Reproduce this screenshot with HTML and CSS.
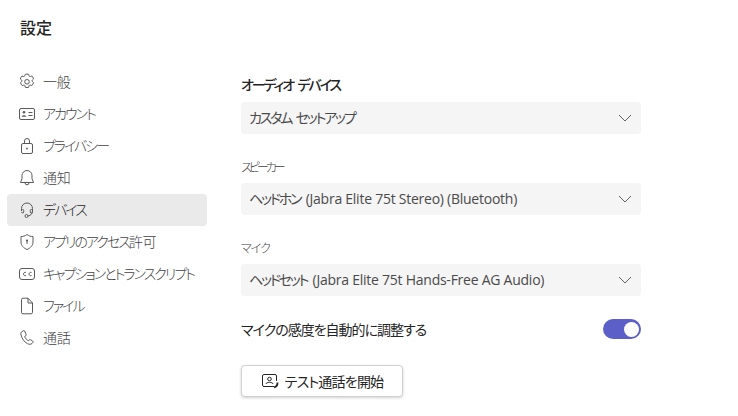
FILE: index.html
```html
<!DOCTYPE html>
<html lang="ja">
  <head>
    <meta charset="UTF-8"/>
    <title>設定</title>
    <link rel="stylesheet" href="styles.css">
  </head>
  <body>
    <h1 class="pageTitle">設定</h1>
    <div class="settings">
      <nav class="sideNav">
        <div class="sideNav_item">
          <svg class="sideNav_icon" viewBox="0 0 18 18"><path d="M7.300 1.300c1.100-.3 2.300-.3 3.400 0l.4 1.600c.1.500.7.800 1.200.6l1.500-.5c.8.800 1.400 1.800 1.700 3l-1.200 1.100c-.4.400-.4 1 0 1.400l1.200 1.100c-.3 1.100-.9 2.200-1.700 3l-1.500-.5c-.5-.2-1.100.1-1.200.6l-.4 1.600c-1.100.3-2.300.3-3.400 0l-.4-1.600c-.1-.5-.7-.8-1.200-.6l-1.500.5c-.8-.8-1.400-1.900-1.700-3l1.200-1.100c.4-.4.4-1 0-1.400L2.300 6c.3-1.200.9-2.200 1.700-3l1.500.5c.5.2 1.100-.1 1.200-.6z"/><circle cx="9" cy="8.800" r="2.300"/></svg>
          <span class="sideNav_label">一般</span>
        </div>
        <div class="sideNav_item">
          <svg class="sideNav_icon" viewBox="0 0 18 18"><rect x="1.500" y="3.500" width="15" height="11" rx="1.500"/><circle class="fill" cx="6" cy="7.200" r="1.300"/><path class="fill" d="M3.700 11.800c0-2 4.600-2 4.600 0z"/><path d="M10.500 7.500h4M10.500 10.500h4"/></svg>
          <span class="sideNav_label navKana">アカウント</span>
        </div>
        <div class="sideNav_item">
          <svg class="sideNav_icon" viewBox="0 0 18 18"><rect x="3.500" y="6.500" width="11" height="10" rx="1.500"/><path d="M6.500 6.500V4a2.500 2.500 0 0 1 5 0v2.500"/><circle class="fill" cx="9" cy="11.500" r="0.900"/></svg>
          <span class="sideNav_label navKana">プライバシー</span>
        </div>
        <div class="sideNav_item">
          <svg class="sideNav_icon" viewBox="0 0 18 18"><path d="M9 1.500a5 5 0 0 1 5 5v3.300l1.500 3.700h-13L4 9.800V6.500a5 5 0 0 1 5-5zM7 13.800a2 2 0 0 0 4 0"/></svg>
          <span class="sideNav_label">通知</span>
        </div>
        <div class="sideNav_item sideNav_item-active">
          <svg class="sideNav_icon" viewBox="0 0 18 18"><path d="M3.500 10V7.500a5.500 5.500 0 0 1 11 0V10c0 2.500-1.500 4.500-4.500 5"/><path d="M3.500 8.500h1.200a1 1 0 0 1 1 1v1.500a1 1 0 0 1-1 1 1.200 1.200 0 0 1-1.200-1.200M14.500 8.500h-1.200a1 1 0 0 0-1 1v1.500a1 1 0 0 0 1 1 1.200 1.200 0 0 0 1.200-1.200"/><circle cx="8.500" cy="15" r="1.500"/></svg>
          <span class="sideNav_label navKana">デバイス</span>
        </div>
        <div class="sideNav_item">
          <svg class="sideNav_icon" viewBox="0 0 18 18"><path d="M9 1.500c2 1.500 3.700 2 6 2v5.500c0 3.500-2.500 6-6 7.500-3.500-1.500-6-4-6-7.500V3.500c2.300 0 4-.5 6-2z"/><circle class="fill" cx="9" cy="7.500" r="1.100"/><path d="M9 8v3"/></svg>
          <span class="sideNav_label"><span class="navKana">アプリのアクセス</span>許可</span>
        </div>
        <div class="sideNav_item">
          <svg class="sideNav_icon" viewBox="0 0 18 18"><rect x="1.500" y="3.500" width="15" height="11" rx="2.500"/><path d="M8 7.500a1.700 1.700 0 1 0 0 3M13.500 7.500a1.700 1.700 0 1 0 0 3"/></svg>
          <span class="sideNav_label navKana">キャプションとトランスクリプト</span>
        </div>
        <div class="sideNav_item">
          <svg class="sideNav_icon" viewBox="0 0 18 18"><path d="M3.500 2.700A1.500 1.500 0 0 1 5 1.200h5L14.500 6v9.300a1.500 1.500 0 0 1-1.500 1.500H5a1.500 1.500 0 0 1-1.500-1.500zM10 1.200V6h4.500"/></svg>
          <span class="sideNav_label navKana">ファイル</span>
        </div>
        <div class="sideNav_item">
          <svg class="sideNav_icon" viewBox="0 0 18 18"><path d="M5.700 1.700 4 2.500C2.800 3.200 2.600 4.500 3 5.900c1 3.700 3.300 7.300 6.500 8.800 1.600.7 3.300.9 4.400-.1l1-1.100c.4-.5.300-1-.2-1.400l-2.200-1.400c-.5-.3-1-.2-1.300.2l-.7.900c-1.800-.8-3.200-2.600-3.800-4.400l1-.6c.5-.3.600-.8.400-1.300L6.700 2c-.2-.4-.6-.5-1-.3z"/></svg>
          <span class="sideNav_label">通話</span>
        </div>
      </nav>
      <main class="devicePanel">
        <h2 class="devicePanel_heading">オーディオ デバイス</h2>
        <div class="selectBox">
          <span class="selectBox_value kana">カスタム セットアップ</span>
          <svg class="selectBox_chevron" viewBox="0 0 14 8"><path d="M1 1l6 6 6-6"/></svg>
        </div>
        <label class="fieldLabel fieldLabel-tight">スピーカー</label>
        <div class="selectBox">
          <span class="selectBox_value"><span class="kana kana-gap">ヘッドホン</span> (Jabra Elite 75t Stereo) (Bluetooth)</span>
          <svg class="selectBox_chevron" viewBox="0 0 14 8"><path d="M1 1l6 6 6-6"/></svg>
        </div>
        <label class="fieldLabel">マイク</label>
        <div class="selectBox">
          <span class="selectBox_value"><span class="kana kana-gap">ヘッドセット</span> (Jabra Elite 75t Hands-Free AG Audio)</span>
          <svg class="selectBox_chevron" viewBox="0 0 14 8"><path d="M1 1l6 6 6-6"/></svg>
        </div>
        <div class="toggleRow">
          <span>マイクの感度を自動的に調整する</span>
          <div class="toggle"><div class="toggle_knob"></div></div>
        </div>
        <button class="testCallButton">
          <svg class="testCallButton_icon" viewBox="0 0 18 16"><path d="M13 13.500H3A1.500 1.500 0 0 1 1.500 12V3A1.500 1.500 0 0 1 3 1.500h11A1.500 1.500 0 0 1 15.500 3v5"/><circle cx="8.500" cy="6" r="1.800"/><path d="M5 11c0-2.200 7-2.200 7 0"/><path class="thick" d="M16.500 9.500c0 2.500-1.500 4.500-3.500 5"/></svg>
          <span>テスト通話を開始</span>
        </button>
      </main>
    </div>
  </body>
</html>
```

FILE: styles.css
```css
* {
  box-sizing: border-box;
}

body {
  margin: 0;
  padding: 16px 0 0 0;
  width: 738px;
  height: 416px;
  overflow: hidden;
  background-color: #fff;
  color: #242424;
  font-family: "Open Sans", "Noto Sans CJK JP", sans-serif;
  font-size: 14px;
  font-feature-settings: "palt";
}

.pageTitle {
  margin: 0 0 0 20px;
  height: 22px;
  line-height: 22px;
  font-size: 16px;
  font-weight: 500;
  font-family: "Noto Sans CJK JP", sans-serif;
}

.settings {
  display: flex;
  margin-top: 26px;
}

.sideNav {
  width: 200px;
  margin-left: 7px;
  padding-top: 2px;
  display: flex;
  flex-direction: column;
}
  .sideNav_item {
    display: flex;
    align-items: center;
    gap: 7px;
    height: 32px;
    padding-left: 11px;
    border-radius: 4px;
    color: #424242;
    font-size: 14px;
    font-weight: 300;
    letter-spacing: -0.2px;
    white-space: nowrap;
  }
  .sideNav_item-active {
    background-color: #ebeaea;
    color: #242424;
  }
  .sideNav_label {
    margin-top: -2px;
  }
  .navKana {
    letter-spacing: -2px;
  }
  .sideNav_icon {
    width: 18px;
    height: 18px;
    flex: none;
    fill: none;
    stroke: #5a5a5a;
    stroke-width: 1;
  }
  .sideNav_icon .fill {
    fill: #5a5a5a;
    stroke: none;
  }

.devicePanel {
  width: 400px;
  margin-left: 34px;
  padding-top: 9px;
}
  .devicePanel_heading {
    margin: 0 0 6px 0;
    height: 23px;
    line-height: 23px;
    font-size: 14px;
    font-weight: 500;
    letter-spacing: -2.1px;
    word-spacing: 3px;
  }

.selectBox {
  display: flex;
  align-items: center;
  justify-content: space-between;
  height: 32px;
  padding: 0 9px 0 8px;
  background-color: #f5f5f5;
  border-radius: 4px;
  color: #4a4a4a;
  font-size: 14px;
  letter-spacing: -0.25px;
  white-space: nowrap;
}
  .selectBox_value {
    margin-top: -2px;
  }
  .kana {
    letter-spacing: -2.2px;
    word-spacing: 3px;
  }
  .kana-gap {
    margin-right: 2px;
  }
  .selectBox_chevron {
    width: 14px;
    height: 8px;
    fill: none;
    stroke: #616161;
    stroke-width: 1;
  }

.fieldLabel {
  display: block;
  margin-top: 23px;
  margin-bottom: 4px;
  height: 22px;
  line-height: 22px;
  font-size: 12px;
  font-weight: 300;
  color: #424242;
  letter-spacing: -1px;
}
.fieldLabel-tight {
  letter-spacing: -3px;
}

.toggleRow {
  display: flex;
  align-items: center;
  justify-content: space-between;
  margin-top: 23px;
  height: 20px;
  font-weight: 400;
  font-size: 14px;
  letter-spacing: -1px;
}
  .toggle {
    width: 38px;
    height: 20px;
    border-radius: 10px;
    background-color: #5b5fc7;
    display: flex;
    align-items: center;
    justify-content: flex-end;
    padding-right: 2px;
  }
  .toggle_knob {
    width: 15px;
    height: 15px;
    border-radius: 50%;
    background-color: #fff;
  }

.testCallButton {
  display: flex;
  align-items: center;
  justify-content: center;
  gap: 6px;
  width: 162px;
  height: 32px;
  margin-top: 26px;
  padding: 0;
  background-color: #fff;
  border: 1px solid #d1d1d1;
  border-radius: 4px;
  box-shadow: 0 1px 3px rgba(0, 0, 0, 0.18);
  color: #242424;
  font-family: inherit;
  font-size: 14px;
  font-weight: 400;
  font-feature-settings: "palt";
  letter-spacing: -0.8px;
}
  .testCallButton_icon {
    width: 18px;
    height: 16px;
    fill: none;
    stroke: #242424;
    stroke-width: 1;
  }
  .testCallButton_icon .thick {
    stroke-width: 1.800;
  }
```
